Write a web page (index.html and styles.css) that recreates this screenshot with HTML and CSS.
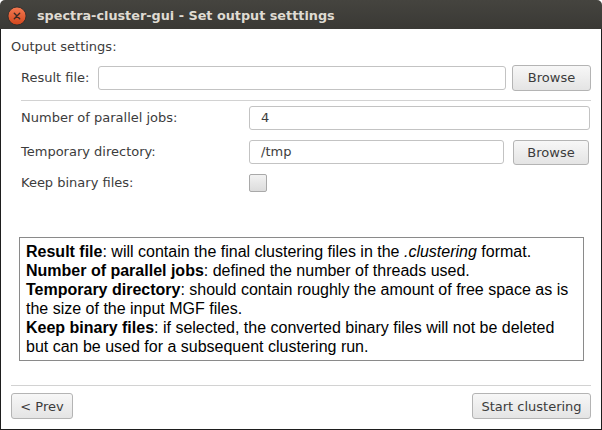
FILE: index.html
```html
<!DOCTYPE html>
<html>
<head>
<meta charset="utf-8">
<link rel="stylesheet" href="styles.css">
</head>
<body>
<div class="window">
  <div class="titlebar">
    <svg class="close" width="20" height="20" viewBox="0 0 20 20">
      <defs>
        <linearGradient id="cg" x1="0" y1="0" x2="0" y2="1">
          <stop offset="0" stop-color="#f47a52"/>
          <stop offset="1" stop-color="#d2461c"/>
        </linearGradient>
      </defs>
      <circle cx="10" cy="10" r="9" fill="url(#cg)" stroke="#2a2a28" stroke-width="0.8"/>
      <path d="M7.3 7.3 L12.7 12.7 M12.7 7.3 L7.3 12.7" stroke="#3a2a24" stroke-width="1.4" stroke-linecap="round"/>
    </svg>
    <span class="title">spectra-cluster-gui - Set output setttings</span>
  </div>
  <div class="content">
    <div class="section-label">Output settings:</div>
    <div class="panel">
      <div class="file-row">
        <span class="label result-label">Result file:</span>
        <div class="input wide"></div>
        <button class="btn browse-top">Browse</button>
      </div>
      <div class="sep"></div>
      <div class="grid">
        <span class="label">Number of parallel jobs:</span>
        <div class="input full">4</div>
        <span class="label">Temporary directory:</span>
        <div class="dir-row">
          <div class="input wide">/tmp</div>
          <button class="btn browse-dir">Browse</button>
        </div>
        <span class="label">Keep binary files:</span>
        <div class="check-cell"><span class="checkbox"></span></div>
      </div>
    </div>
    <div class="help">
      <b>Result file</b>: will contain the final clustering files in the <i>.clustering</i> format.<br>
      <b>Number of parallel jobs</b>: defined the number of threads used.<br>
      <b>Temporary directory</b>: should contain roughly the amount of free space as is the size of the input MGF files.<br>
      <b>Keep binary files</b>: if selected, the converted binary files will not be deleted but can be used for a subsequent clustering run.
    </div>
    <div class="spacer"></div>
    <div class="sep bottom-sep"></div>
    <div class="nav">
      <button class="btn prev">&lt; Prev</button>
      <button class="btn start">Start clustering</button>
    </div>
  </div>
</div>
</body>
</html>
```

FILE: styles.css
```css
html, body {
  margin: 0;
  padding: 0;
  background: #ffffff;
}
.window {
  width: 602px;
  height: 430px;
  display: flex;
  flex-direction: column;
  font-family: "DejaVu Sans", sans-serif;
  font-size: 13px;
  color: #3c3c3c;
}
.titlebar {
  height: 29px;
  flex: none;
  background: linear-gradient(#45443f, #3a3935);
  border-radius: 5px 5px 0 0;
  display: flex;
  align-items: center;
  box-sizing: border-box;
  padding-left: 7px;
}
.close {
  flex: none;
  margin-top: 2px;
}
.title {
  margin-left: 10px;
  color: #dfdbd2;
  font-family: "DejaVu Sans", sans-serif;
  font-weight: bold;
  font-size: 12.8px;
  margin-top: 2px;
}
.content {
  flex: 1;
  display: flex;
  flex-direction: column;
  border: 1px solid #1e1e1e;
  border-top: none;
  padding: 0 10px 10px 10px;
  background: #ffffff;
}
.section-label {
  margin-top: 10px;
  line-height: 16px;
}
.panel {
  padding-left: 10px;
  margin-top: 10px;
}
.label {
  line-height: 16px;
}
.file-row {
  display: flex;
  align-items: center;
  height: 25px;
}
.result-label {
  width: 77px;
  flex: none;
}
.input {
  box-sizing: border-box;
  height: 24px;
  border: 1px solid #c3c3c3;
  border-radius: 3px;
  background: #fff;
  padding: 0 0 0 11px;
  line-height: 22px;
  font-size: 13px;
  color: #3c3c3c;
}
.wide {
  flex: 1;
}
.btn {
  box-sizing: border-box;
  font-family: "DejaVu Sans", sans-serif;
  font-size: 13px;
  color: #3c3c3c;
  border: 1px solid #b4b4b4;
  border-radius: 3px;
  background: linear-gradient(#f7f7f7, #e4e4e4);
  padding: 0;
  margin: 0;
}
.browse-top {
  width: 79px;
  height: 26px;
  margin-left: 6px;
  flex: none;
}
.sep {
  height: 1px;
  background: #d2d2d2;
}
.panel .sep {
  margin-top: 10px;
}
.grid {
  display: grid;
  grid-template-columns: 228px 1fr;
  grid-template-rows: 24px 24px 18px;
  row-gap: 10px;
  align-items: center;
  margin-top: 5px;
}
.grid .input.full {
  margin-right: 1px;
}
.dir-row {
  display: flex;
  align-items: center;
}
.browse-dir {
  width: 76px;
  height: 25px;
  margin-left: 9px;
  margin-right: 2px;
  flex: none;
}
.check-cell {
  display: flex;
  align-items: center;
}
.checkbox {
  box-sizing: border-box;
  width: 18px;
  height: 18px;
  border: 1px solid #a9a9a9;
  border-radius: 2px;
  background: linear-gradient(#f2f2f2, #dcdcdc);
}
.help {
  margin-top: 45px;
  margin-left: 8px;
  width: 565px;
  box-sizing: border-box;
  border: 1px solid #8a8a8a;
  padding: 4px 6px 4px 6px;
  font-family: "Liberation Sans", Arial, sans-serif;
  font-size: 16px;
  line-height: 19px;
  color: #000;
}
.spacer {
  flex: 1;
}
.nav {
  display: flex;
  justify-content: space-between;
  margin-top: 7px;
}
.prev {
  width: 62px;
  height: 26px;
}
.start {
  width: 119px;
  height: 26px;
}
```
